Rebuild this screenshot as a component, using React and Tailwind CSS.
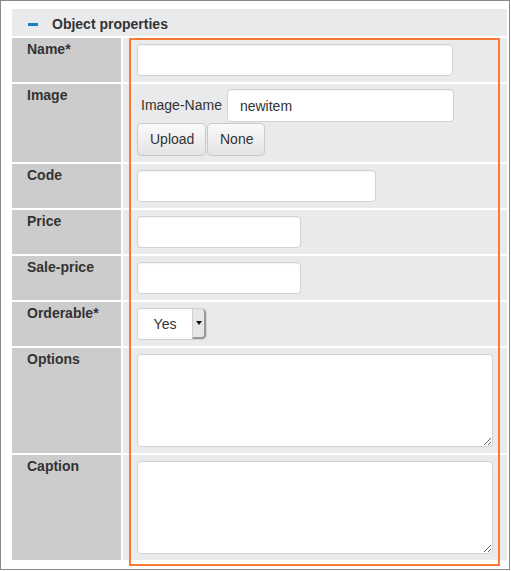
import React from 'react';

const font = { fontFamily: '"Liberation Sans", Arial, sans-serif' };

const inputCls =
  'h-[32px] rounded-[4px] border border-[#d2d2d2] bg-white px-3 text-[14px] text-[#333] shadow-[inset_0_1px_1px_rgba(0,0,0,0.05)] outline-none';

const btnCls =
  'h-[33px] rounded-[4px] border border-[#c9c9c9] bg-gradient-to-b from-[#fafafa] to-[#e4e4e4] px-[12px] text-[14px] text-[#333]';

const Row = ({ label, children }) => (
  <div className="flex">
    <div className="w-[109px] shrink-0 bg-[#cccccc] pl-[15px] pt-[3px] text-[14px] font-bold leading-[16px] text-[#333]">
      {label}
    </div>
    <div className="ml-[2px] flex-1 bg-[#e9eaec] px-[14px] py-[6px]">{children}</div>
  </div>
);

export default function App() {
  return (
    <div className="w-[511px] h-[571px] bg-white" style={font}>
      <div className="relative w-[510px] h-[570px] border border-[#8a8a8a] bg-white pl-[11px] pr-[2px] pt-[8px]">
        <div className="flex h-[27px] items-center bg-[#e9eaec] pt-[4px]">
          <span className="ml-[16px] block h-[3px] w-[10px] bg-[#1b7fc4]" />
          <span className="ml-[14px] text-[14px] font-bold text-[#333]">Object properties</span>
        </div>

        <div className="mt-[2px] flex flex-col gap-[2px]">
          <Row label="Name*">
            <input className={`${inputCls} w-[316px]`} />
          </Row>
          <Row label="Image">
            <div className="-mt-[1px] flex flex-col gap-[1px]">
              <div className="flex items-center">
                <span className="ml-[4px] mr-[5px] text-[14px] text-[#333]">Image-Name</span>
                <input className={`${inputCls} h-[33px] w-[227px]`} defaultValue="newitem" />
              </div>
              <div className="flex gap-[1px]">
                <button className={`${btnCls} w-[69px]`}>Upload</button>
                <button className={`${btnCls} w-[58px]`}>None</button>
              </div>
            </div>
          </Row>
          <Row label="Code">
            <input className={`${inputCls} w-[239px]`} />
          </Row>
          <Row label="Price">
            <input className={`${inputCls} w-[164px]`} />
          </Row>
          <Row label="Sale-price">
            <input className={`${inputCls} w-[164px]`} />
          </Row>
          <Row label="Orderable*">
            <div className="flex h-[32px] w-[70px] overflow-hidden rounded-[4px] border border-[#d2d2d2] bg-white">
              <span className="flex flex-1 items-center justify-center text-[14px] text-[#333]">Yes</span>
              <span className="flex w-[14px] items-center justify-center rounded-r-[4px] border-b-2 border-l border-r-2 border-[#cfcfcf] border-b-[#9a9a9a] border-r-[#9a9a9a] bg-[#e6e6e6]">
                <svg width="6" height="4" viewBox="0 0 6 4">
                  <path d="M0 0h6L3 4z" fill="#111" />
                </svg>
              </span>
            </div>
          </Row>
          <Row label="Options">
            <textarea className="block h-[93px] w-[356px] rounded-[4px] border border-[#d2d2d2] bg-white" />
          </Row>
          <Row label="Caption">
            <textarea className="block h-[93px] w-[356px] rounded-[4px] border border-[#d2d2d2] bg-white" />
          </Row>
        </div>

        <div className="pointer-events-none absolute left-[128px] top-[37px] h-[528px] w-[371px] border-2 border-[#fb7a32]" />
      </div>
    </div>
  );
}
